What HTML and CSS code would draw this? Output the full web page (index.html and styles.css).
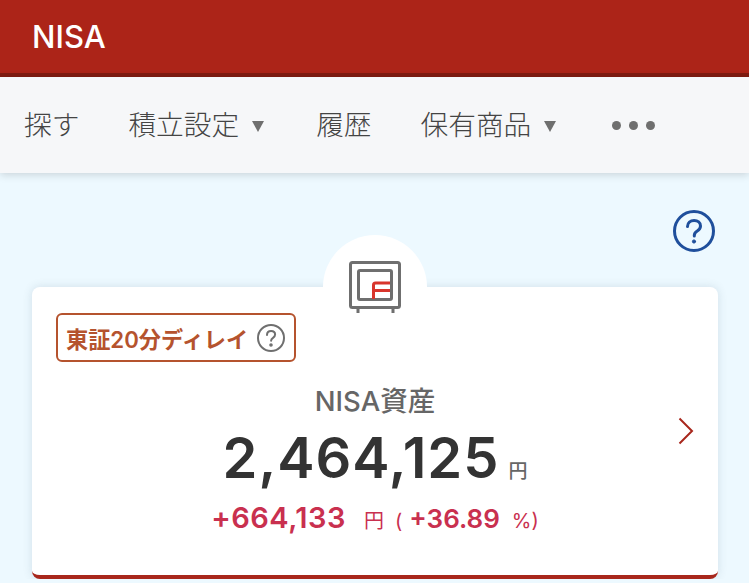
FILE: index.html
```html
<!DOCTYPE html>
<html lang="ja">
<head>
    <meta charset="UTF-8">
    <meta name="viewport" content="width=device-width, initial-scale=1.0">
    <title>NISA</title>
    <link rel="stylesheet" href="styles.css">
</head>
<body>
    <header class="app-header">
        <h1>NISA</h1>
    </header>
    <nav class="tabs">
        <a href="#">探す</a>
        <a href="#">積立設定<span class="caret"></span></a>
        <a href="#">履歴</a>
        <a href="#">保有商品<span class="caret"></span></a>
        <a href="#" class="more"><span></span><span></span><span></span></a>
    </nav>
    <main class="content">
        <div class="help-row">
            <svg class="help-icon" viewBox="0 0 42 42" width="42" height="42" fill="none" stroke="#1f4f9c" stroke-width="3" stroke-linecap="round">
                <circle cx="21" cy="21" r="19.5"/>
                <path d="M14.5 16.5c0-3.8 2.9-6 6.6-6 3.6 0 6.4 2.2 6.4 5.4 0 2.5-1.4 3.8-3.3 5.1-1.9 1.2-2.9 2.2-2.9 4.5v.6"/>
                <circle cx="21" cy="31.500" r="1.600" fill="#1f4f9c" stroke-width="1"/>
            </svg>
        </div>
        <div class="safe-tab">
            <svg class="safe-icon" viewBox="0 0 52 52" width="52" height="52" fill="none" stroke-width="3">
                <rect x="1.500" y="1.500" width="49" height="45" rx="2" stroke="#6f6f6f"/>
                <rect x="9.500" y="9.500" width="33" height="29" rx="1.500" stroke="#6f6f6f"/>
                <path d="M24.500 38V24a2 2 0 0 1 2-2H41M24.500 29.500H41" stroke="#d8352c"/>
                <path d="M9 47v5M44 47v5" stroke="#6f6f6f"/>
            </svg>
        </div>
        <section class="card">
            <div class="delay-badge">
                <span>東証20分ディレイ</span>
                <svg viewBox="0 0 28 28" width="28" height="28" fill="none" stroke="#6f6f6f" stroke-width="2" stroke-linecap="round">
                    <circle cx="14" cy="14" r="13"/>
                    <path d="M10 11c0-2.500 1.800-4 4.100-4 2.300 0 4 1.400 4 3.500 0 1.600-.9 2.500-2.100 3.300-1.200.8-1.900 1.500-1.900 3"/>
                    <circle cx="14" cy="21" r=".8" fill="#6f6f6f"/>
                </svg>
            </div>
            <div class="summary">
                <div></div>
                <div class="figures">
                    <h2>NISA資産</h2>
                    <p class="total">2,464,125<span>円</span></p>
                    <p class="gain"><b>+664,133</b><span class="yen">円</span><span class="paren">(</span><b class="rate">+36.89</b><span class="pct">%)</span></p>
                </div>
                <svg class="chevron" viewBox="0 0 16 28" width="16" height="28" fill="none" stroke="#a8271c" stroke-width="2">
                    <path d="M1.500 1.500 14 14 1.500 26.500"/>
                </svg>
            </div>
        </section>
    </main>
</body>
</html>
```

FILE: styles.css
```css
html {
    height: 100%;
    overflow: hidden;
}
body {
    font-family: Inter, "Noto Sans CJK JP", sans-serif;
    background-color: #edf9ff;
    margin: 0;
    padding: 0;
}
.app-header {
    height: 73px;
    background-color: #ac2418;
    border-bottom: 4px solid #7f1b11;
    display: flex;
    align-items: center;
    padding-left: 32px;
}
.app-header h1 {
    margin: -1px 0 0;
    color: white;
    font-size: 31px;
    font-weight: 500;
}
.tabs {
    height: 96px;
    background-color: #f6f7f9;
    box-shadow: 0 2px 8px rgba(0, 0, 0, 0.15);
    display: flex;
    align-items: center;
    gap: 49px;
    padding-left: 24px;
}
.tabs a {
    display: flex;
    align-items: center;
    margin-top: -4px;
    text-decoration: none;
    color: #444;
    font-size: 27.7px;
    font-weight: 300;
}
.caret {
    margin: 7px 3px 0 13px;
    width: 0;
    height: 0;
    border-left: 6px solid transparent;
    border-right: 6px solid transparent;
    border-top: 11px solid #6f6f6f;
}
.tabs .more {
    gap: 8px;
    margin: 0 0 0 4px;
}
.more span {
    width: 9px;
    height: 9px;
    border-radius: 50%;
    background-color: #6f6f6f;
}
.content {
    padding: 37px 31px 0 32px;
}
.help-row {
    display: flex;
    justify-content: flex-end;
    padding-right: 3px;
    height: 25px;
}
.safe-tab {
    position: relative;
    z-index: 1;
    width: 104px;
    height: 52px;
    margin: 0 auto;
    padding-top: 26px;
    box-sizing: border-box;
    background-color: white;
    border-radius: 52px 52px 0 0;
    display: flex;
    justify-content: center;
}
.safe-icon {
    flex: none;
}
.card {
    height: 262px;
    background-color: white;
    border-bottom: 4px solid #a8271c;
    border-radius: 8px;
    box-shadow: 0 0 10px rgba(60, 90, 110, 0.16);
    padding: 26px 24px 0;
}
.delay-badge {
    display: inline-flex;
    align-items: center;
    gap: 9px;
    height: 45px;
    padding: 0 9px 0 8px;
    border: 2px solid #b5532e;
    border-radius: 6px;
    color: #b5532e;
    font-size: 22.2px;
    font-weight: 600;
}
.summary {
    display: grid;
    grid-template-columns: 1fr auto 1fr;
    align-items: start;
    margin-top: 22px;
}
.figures {
    text-align: center;
}
.figures h2 {
    margin: 0;
    color: #666;
    font-size: 27.5px;
    font-weight: 500;
    line-height: 34px;
}
.total {
    margin: 7px 0 0;
    color: #333;
    font-size: 56px;
    font-weight: 600;
    letter-spacing: 1px;
    line-height: 66px;
}
.total span {
    margin-left: 9px;
    color: #666;
    font-size: 19px;
    font-weight: 500;
    letter-spacing: 0;
}
.gain {
    margin: -5px 0 0;
    color: #c9304f;
    font-size: 20px;
    line-height: 36px;
}
.gain b {
    font-size: 29px;
    font-weight: 600;
    letter-spacing: 0.5px;
}
.gain .rate {
    font-size: 26px;
    letter-spacing: 0;
}
.yen {
    margin-left: 18px;
}
.paren {
    margin: 0 7px 0 11px;
}
.pct {
    margin-left: 12px;
}
.chevron {
    justify-self: end;
    margin-top: 33px;
}
```
